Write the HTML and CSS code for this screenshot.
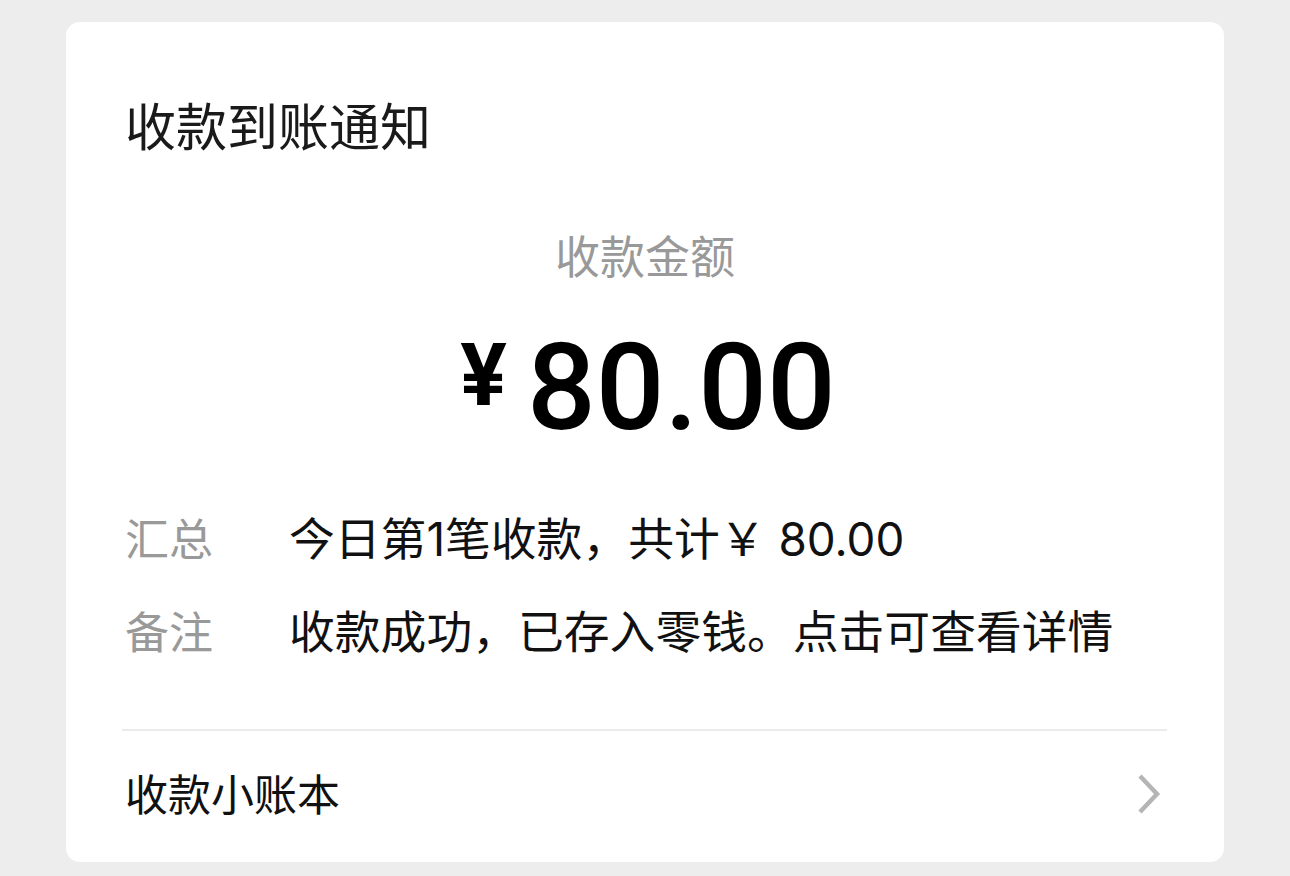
FILE: index.html
```html
<!DOCTYPE html>
<html lang="zh-CN">
<head>
<meta charset="utf-8">
<title>收款到账通知</title>
<link rel="stylesheet" href="styles.css">
</head>
<body>
<div class="card">
  <h1 class="title">收款到账通知</h1>
  <div class="amount-block">
    <div class="amount-label">收款金额</div>
    <div class="amount">
      <span class="currency">¥</span>
      <span class="value">80.00</span>
    </div>
  </div>
  <div class="details">
    <div class="row">
      <span class="row-label">汇总</span>
      <span class="row-value">今日第1笔收款，共计￥ 80.00</span>
    </div>
    <div class="row">
      <span class="row-label">备注</span>
      <span class="row-value">收款成功，已存入零钱。点击可查看详情</span>
    </div>
  </div>
  <div class="footer">
    <span class="footer-text">收款小账本</span>
    <svg class="chevron" width="26" height="42" viewBox="0 0 26 42">
      <path d="M4 3 L21 21 L4 39" fill="none" stroke="#b5b5b5" stroke-width="4.5" stroke-linecap="butt" stroke-linejoin="miter"/>
    </svg>
  </div>
</div>
</body>
</html>
```

FILE: styles.css
```css
html, body {
  margin: 0;
  padding: 0;
}

body {
  background: #ededed;
  font-family: "Noto Sans CJK SC", "Noto Sans", sans-serif;
  color: #111;
  width: 1290px;
  height: 876px;
  overflow: hidden;
}

.card {
  box-sizing: border-box;
  margin: 22px 0 0 66px;
  width: 1158px;
  height: 840px;
  background: #fff;
  border-radius: 14px;
  padding: 77px 57px 0 57px;
  display: flex;
  flex-direction: column;
}

.title {
  margin: 0 0 0 2px;
  font-size: 51px;
  line-height: 50px;
  font-weight: 400;
  color: #1a1a1a;
}

.amount-block {
  display: flex;
  flex-direction: column;
  align-items: center;
  margin-top: 83px;
}

.amount-label {
  font-size: 45px;
  line-height: 45px;
  color: #999;
}

.amount {
  display: flex;
  align-items: flex-start;
  margin-top: 50px;
  margin-left: 6px;
  color: #000;
  font-family: Roboto, sans-serif;
}

.currency {
  font-size: 87px;
  line-height: 86px;
  font-weight: 700;
  margin-top: 5px;
  margin-right: 20px;
}

.value {
  font-size: 121px;
  line-height: 122px;
  font-weight: 500;
}

.details {
  margin-top: 65px;
  display: flex;
  flex-direction: column;
  gap: 44px;
}

.row {
  display: flex;
  align-items: baseline;
  padding-left: 2px;
}

.row-label {
  width: 164px;
  flex: none;
  font-size: 44px;
  line-height: 46px;
  color: #999;
}

.row-value {
  font-family: Inter, "Noto Sans CJK SC", sans-serif;
  font-size: 45.8px;
  line-height: 46px;
  color: #111;
}

.footer {
  margin-top: 73px;
  padding-bottom: 8px;
  border-top: 2px solid #ebebeb;
  margin-left: -1px;
  display: flex;
  align-items: center;
  justify-content: space-between;
  flex: 1;
}

.footer-text {
  margin-left: 3px;
  font-size: 43px;
  line-height: 43px;
  color: #111;
}

.chevron {
  margin-right: 5px;
  margin-top: 3px;
  display: block;
}
```
